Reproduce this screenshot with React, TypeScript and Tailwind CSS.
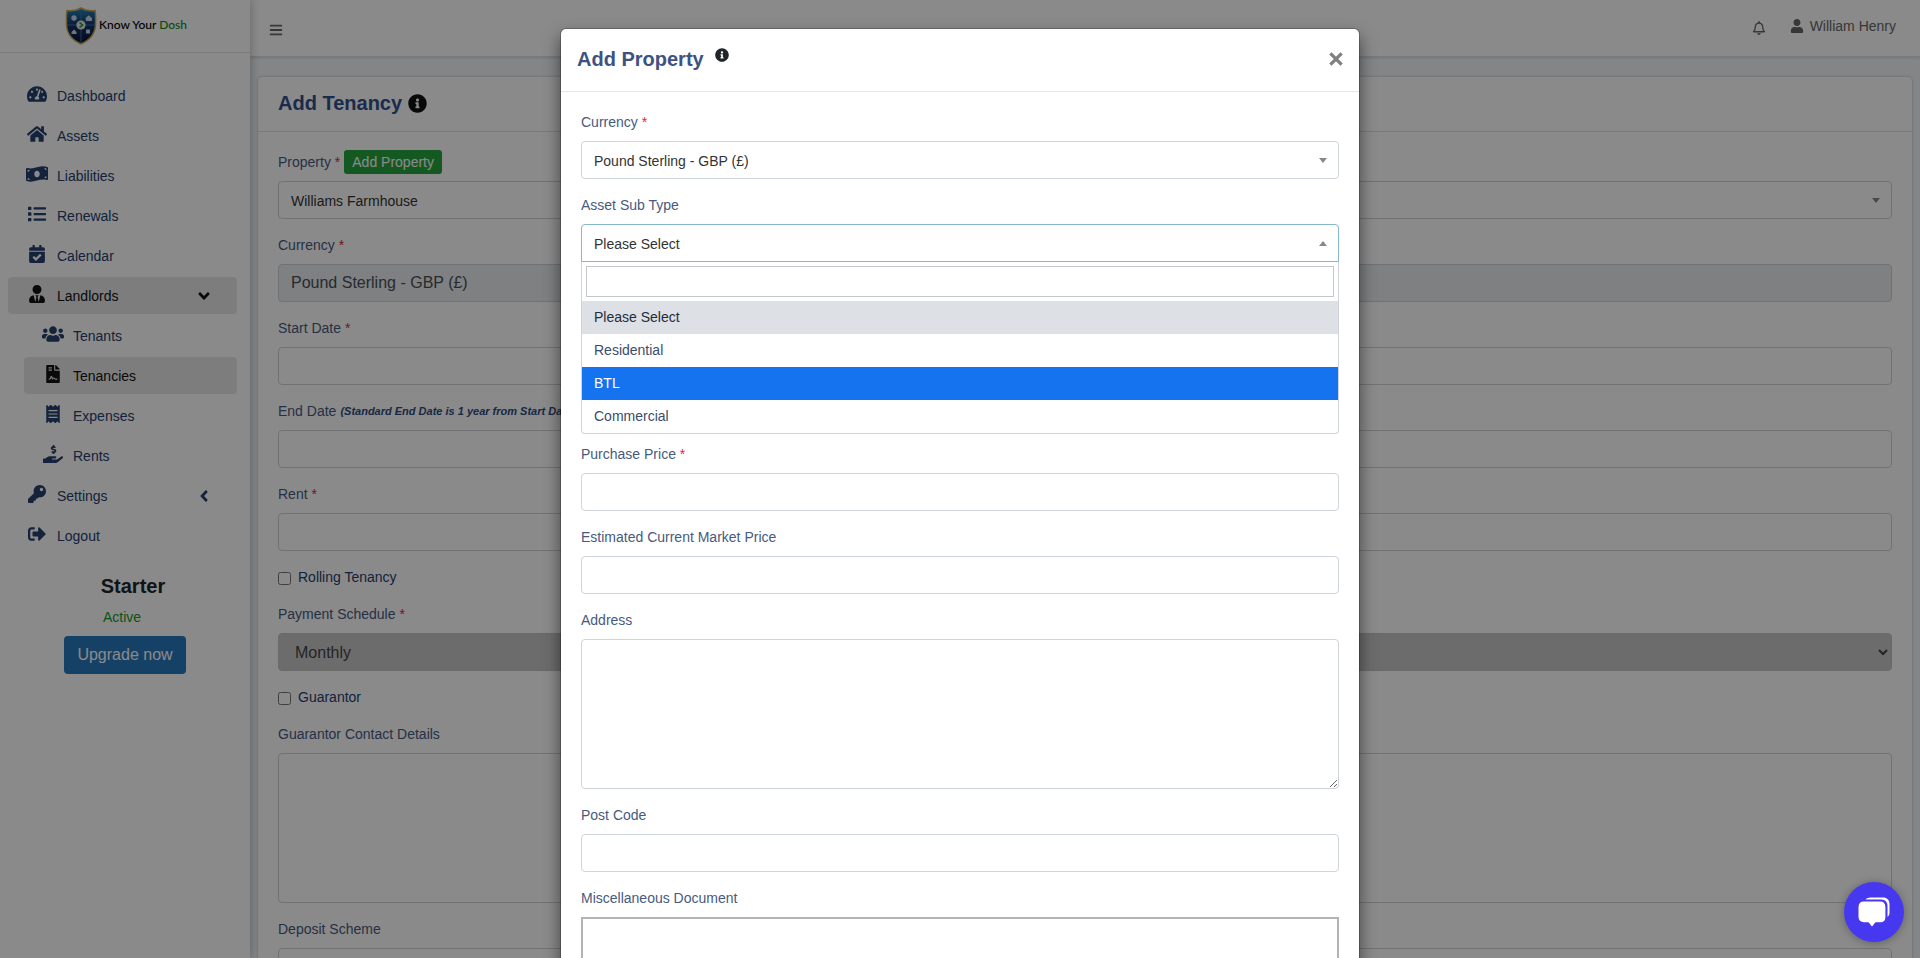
import type { ReactNode } from "react";
import {
  FaAngleDown,
  FaAngleLeft,
  FaBars,
  FaCalendarCheck,
  FaFileContract,
  FaHandHoldingUsd,
  FaHome,
  FaInfoCircle,
  FaKey,
  FaList,
  FaMoneyBillWave,
  FaReceipt,
  FaRegBell,
  FaSignOutAlt,
  FaTachometerAlt,
  FaUser,
  FaUsers,
  FaUserTie,
} from "react-icons/fa";

const control =
  "block w-full h-[38px] rounded border border-[#ced4da] bg-white px-3 pt-[2px] text-[#333] outline-none";
const area =
  "block w-full h-[150px] rounded border border-[#ced4da] bg-white px-3 py-2 outline-none";

function Logo() {
  return (
    <a href="#" className="flex h-[53px] items-center border-b border-[#dee2e6] pl-[65px]">
      <svg viewBox="0 0 32 38" className="mr-[2px] h-[38px] w-8 shrink-0">
        <defs>
          <linearGradient id="shield" x1="0" y1="0" x2="0" y2="1">
            <stop offset="0" stopColor="#1d86b8" />
            <stop offset=".45" stopColor="#13386f" />
            <stop offset="1" stopColor="#0a1030" />
          </linearGradient>
        </defs>
        <path d="M16 1C12 3.500 7 4 2 3.500C1 8 1.500 13 1.500 18C2 28 9 34 16 37C23 34 30 28 30.500 18C30.500 13 31 8 30 3.500C25 4 20 3.500 16 1Z" fill="url(#shield)" stroke="#c9ad5a" strokeWidth="1.500" />
        <path d="M16 3V36M2 18H30" stroke="#4a78a8" strokeWidth=".8" />
        <g fill="#c9d6ea">
          <circle cx="9" cy="11" r="2.700" />
          <path d="M20.500 11l3.200-2.800L27 11v3h-6z" />
          <path d="M6.500 25l2.500-2.500 2.500 2.500v2h-5z" />
          <rect x="21" y="22.500" width="4" height="4" rx=".6" />
        </g>
        <circle cx="16" cy="18" r="4.600" fill="#dfe9dc" />
        <path d="M14.500 15.500l3 2.500-3 2.500" fill="none" stroke="#2f8a3a" strokeWidth="1.600" />
      </svg>
      <span className="pb-[2px] font-[Lato,sans-serif] text-xs font-medium whitespace-nowrap text-black">
        Know Your <span className="text-[#0b8a1c]">Dosh</span>
      </span>
    </a>
  );
}

type NavProps = {
  icon: ReactNode;
  label: string;
  sub?: boolean;
  active?: boolean;
  arrow?: ReactNode;
};

function NavItem({ icon, label, sub, active, arrow }: NavProps) {
  return (
    <li className={sub ? "pl-4" : ""}>
      <a
        href="#"
        className={`flex h-[37px] items-center rounded pl-4 pr-6 ${
          active ? "bg-[#e7e7e7] text-[#111]" : "text-[#26406f]"
        }`}
      >
        <span className="flex w-[26px] justify-center pb-1 text-lg">{icon}</span>
        <span className="ml-[7px] flex-1">{label}</span>
        {arrow}
      </a>
    </li>
  );
}

function Sidebar() {
  return (
    <aside className="z-10 w-[250px] shrink-0 bg-white shadow-[0_0_10px_rgba(0,0,0,.3)]">
      <Logo />
      <nav className="px-2 pt-6">
        <ul className="mr-[5px] flex flex-col gap-[3px]">
          <NavItem icon={<FaTachometerAlt className="text-xl" />} label="Dashboard" />
          <NavItem icon={<FaHome className="text-xl" />} label="Assets" />
          <NavItem icon={<FaMoneyBillWave className="text-[22px]" />} label="Liabilities" />
          <NavItem icon={<FaList />} label="Renewals" />
          <NavItem icon={<FaCalendarCheck />} label="Calendar" />
          <NavItem icon={<FaUserTie />} label="Landlords" active arrow={<FaAngleDown className="text-lg" />} />
          <NavItem icon={<FaUsers className="text-[22px]" />} label="Tenants" sub />
          <NavItem icon={<FaFileContract />} label="Tenancies" sub active />
          <NavItem icon={<FaReceipt />} label="Expenses" sub />
          <NavItem icon={<FaHandHoldingUsd className="text-xl" />} label="Rents" sub />
          <NavItem icon={<FaKey />} label="Settings" arrow={<FaAngleLeft className="text-lg" />} />
          <NavItem icon={<FaSignOutAlt />} label="Logout" />
        </ul>
      </nav>
      <div className="flex flex-col items-center">
        <h2 className="mt-[17px] pl-4 text-xl leading-[30px] font-bold text-[#212529]">Starter</h2>
        <p className="mt-[6px] mr-[6px] leading-[21px] text-[#129a2c]">Active</p>
        <button className="mt-2 h-[38px] rounded bg-[#2778bd] px-[13px] text-base text-white">
          Upgrade now
        </button>
      </div>
    </aside>
  );
}

type FieldProps = {
  id: string;
  label: string;
  required?: boolean;
  extra?: ReactNode;
  children: ReactNode;
};

function Field({ id, label, required, extra, children }: FieldProps) {
  return (
    <div className="mb-4">
      <div className="mb-[10px] flex h-[19px] items-center gap-1">
        <label htmlFor={id} className="text-[#475a80]">
          {label}
          {required && <span className="text-[#dc2438]"> *</span>}
        </label>
        {extra}
      </div>
      {children}
    </div>
  );
}

function Caret({ up }: { up?: boolean }) {
  return (
    <svg
      viewBox="0 0 8 5"
      className={`pointer-events-none absolute top-[17px] right-3 h-[5px] w-2 fill-[#888] ${up ? "rotate-180" : ""}`}
    >
      <path d="M0 0H8L4 5Z" />
    </svg>
  );
}

function Select({ id, value }: { id: string; value: string }) {
  return (
    <div className="relative">
      <select id={id} className={`${control} appearance-none`}>
        <option>{value}</option>
      </select>
      <Caret />
    </div>
  );
}

function Check({ id, label }: { id: string; label: string }) {
  return (
    <div className="mb-[18px] flex h-[19px] items-center">
      <input id={id} type="checkbox" className="mt-1 mr-[7px] h-[13px] w-[13px]" />
      <label htmlFor={id} className="text-[#26406f]">
        {label}
      </label>
    </div>
  );
}

function TenancyCard() {
  return (
    <section className="mx-2 mt-5 rounded bg-white shadow-[0_0_3px_rgba(0,0,0,.25)]">
      <header className="flex h-[55px] items-center gap-[6px] border-b border-[#dcdfe3] px-5 pb-[2px] text-xl font-bold text-[#33508c]">
        <h1>Add Tenancy</h1>
        <FaInfoCircle className="text-[19px] text-[#111]" />
      </header>
      <form className="p-5">
        <Field
          id="property"
          label="Property"
          required
          extra={
            <button type="button" className="h-6 shrink-0 rounded-[3px] bg-[#28a540] px-2 text-white">
              Add Property
            </button>
          }
        >
          <Select id="property" value="Williams Farmhouse" />
        </Field>
        <Field id="currency" label="Currency" required>
          <input id="currency" readOnly value="Pound Sterling - GBP (£)" className="block h-[38px] w-full rounded border border-[#ced4da] bg-[#e9ecef] px-3 text-base text-[#495057] outline-none" />
        </Field>
        <Field id="start" label="Start Date" required>
          <input id="start" className={control} />
        </Field>
        <Field
          id="end"
          label="End Date"
          extra={
            <em className="pt-[2px] text-[11px] font-bold whitespace-nowrap text-[#2f4a7d]">
              (Standard End Date is 1 year from Start Date)
            </em>
          }
        >
          <input id="end" className={control} />
        </Field>
        <Field id="rent" label="Rent" required>
          <input id="rent" className={control} />
        </Field>
        <Check id="rolling" label="Rolling Tenancy" />
        <Field id="schedule" label="Payment Schedule" required>
          <select id="schedule" className="block h-[38px] w-full rounded border border-[#c4c4c4] bg-[#c8c8c8] px-3 text-base text-[#444]">
            <option>Monthly</option>
          </select>
        </Field>
        <Check id="guarantor" label="Guarantor" />
        <Field id="contact" label="Guarantor Contact Details">
          <textarea id="contact" className={`${area} resize-none`} />
        </Field>
        <Field id="deposit" label="Deposit Scheme">
          <input id="deposit" className={control} />
        </Field>
      </form>
    </section>
  );
}

function SubTypePicker() {
  return (
    <div>
      <div className="relative">
        <button
          id="subtype"
          type="button"
          aria-expanded="true"
          className="block h-[38px] w-full rounded-t border border-[#86b7cc] bg-white px-3 pt-[2px] text-left text-[#333]"
        >
          Please Select
        </button>
        <Caret up />
      </div>
      <div className="-mb-[6px] rounded-b border border-t-0 border-[#ced4da] bg-white">
        <div className="p-1">
          <input aria-label="Search" className="block h-[31px] w-full border border-[#c4c8cc] px-2 outline-none" />
        </div>
        <ul role="listbox" className="leading-[33px]">
          <li role="option" aria-selected="true" className="bg-[#dde0e4] px-3 text-[#1f2d3d]">Please Select</li>
          <li role="option" aria-selected="false" className="px-3 text-[#3c4c6e]">Residential</li>
          <li role="option" aria-selected="false" className="bg-[#1673f0] px-3 text-white">BTL</li>
          <li role="option" aria-selected="false" className="px-3 text-[#3c4c6e]">Commercial</li>
        </ul>
      </div>
    </div>
  );
}

function PropertyDialog() {
  return (
    <div className="absolute inset-0 z-20 overflow-hidden bg-black/46">
      <div
        role="dialog"
        aria-labelledby="dialog-title"
        className="mx-auto mt-7 max-w-[800px] rounded-md border border-black/20 bg-white bg-clip-padding shadow-[0_8px_16px_rgba(0,0,0,.5)]"
      >
        <header className="flex h-[63px] items-center border-b border-[#e4e7ea] px-4 pb-[2px]">
          <h2 id="dialog-title" className="text-xl font-bold text-[#3d5283]">Add Property</h2>
          <FaInfoCircle className="mb-2 ml-[11px] text-sm text-[#212529]" />
          <button aria-label="Close" className="ml-auto">
            <svg viewBox="0 0 12 12" className="h-[14px] w-[14px]" fill="none" stroke="#7f7f7f" strokeWidth="2.800">
              <path d="M1.200 1.200L10.800 10.800M10.800 1.200L1.200 10.800" />
            </svg>
          </button>
        </header>
        <form className="p-5">
          <Field id="asset-currency" label="Currency" required>
            <Select id="asset-currency" value="Pound Sterling - GBP (£)" />
          </Field>
          <Field id="subtype" label="Asset Sub Type">
            <SubTypePicker />
          </Field>
          <Field id="price" label="Purchase Price" required>
            <input id="price" className={control} />
          </Field>
          <Field id="market" label="Estimated Current Market Price">
            <input id="market" className={control} />
          </Field>
          <Field id="address" label="Address">
            <textarea id="address" className={area} />
          </Field>
          <Field id="postcode" label="Post Code">
            <input id="postcode" className={control} />
          </Field>
          <Field id="document" label="Miscellaneous Document">
            <input id="document" className="block h-[150px] w-full border-2 border-[#b4b4b4] bg-white outline-none" />
          </Field>
        </form>
      </div>
    </div>
  );
}

export default function App() {
  return (
    <div className="relative flex h-screen overflow-hidden bg-[#f4f6f9] font-['Liberation_Sans',Arial,sans-serif] text-sm">
      <Sidebar />
      <main className="min-w-0 flex-1">
        <div className="flex h-[57px] items-center border-b border-[#dee2e6] bg-white pr-6 pl-[19px] text-[#666] shadow-sm">
          <button aria-label="Menu" className="mt-1 text-sm">
            <FaBars />
          </button>
          <button aria-label="Notifications" className="mr-6 ml-auto text-sm">
            <FaRegBell />
          </button>
          <a href="#" className="flex items-center gap-[6px] pb-1">
            <FaUser className="text-sm" />
            William Henry
          </a>
        </div>
        <TenancyCard />
      </main>
      <PropertyDialog />
      <button
        aria-label="Chat"
        className="absolute right-4 bottom-4 z-30 flex h-[60px] w-[60px] items-center justify-center rounded-full bg-[#4638ee] shadow-[0_1px_8px_rgba(0,0,0,.3)]"
      >
        <svg viewBox="0 0 32 30" className="h-[30px] w-8">
          <path d="M7.500 2.500C9 1 10.500 .6 12.500 .5H25C29 .5 31.300 2.800 31.500 7V15C31.500 17.500 31 18.800 29.500 20V9C29.500 5 27 2.600 23.500 2.500Z" fill="#fff" />
          <path d="M6 4.500H22C25.500 4.500 27.300 6.300 27.400 10V20C27.300 23.500 26 25 22.500 25.300H17.500L14 29.500L10.500 25.300H6C2.500 25 .7 23.500 .5 20V10C.7 6.300 2.500 4.500 6 4.500Z" fill="#fff" />
        </svg>
      </button>
    </div>
  );
}
